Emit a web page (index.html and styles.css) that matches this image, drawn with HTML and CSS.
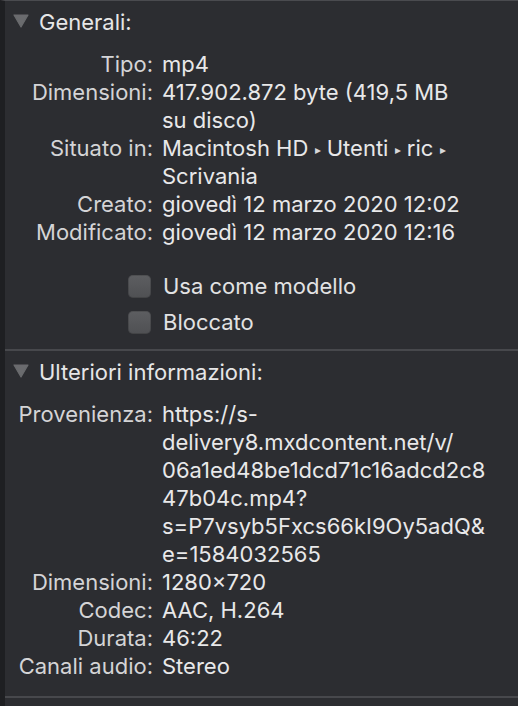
FILE: index.html
```html
<!DOCTYPE html>
<html lang="it">
<head>
<meta charset="utf-8">
<title>Info</title>
<link rel="stylesheet" href="styles.css">
</head>
<body>
<div class="panel">
  <section class="group">
    <div class="group-head">
      <svg class="disclosure" width="16" height="14" viewBox="0 0 16 14"><polygon points="1,1 15,1 8,13" fill="#6a6b6e" stroke="#6a6b6e" stroke-width="1.2" stroke-linejoin="round"/></svg>
      <span>Generali:</span>
    </div>
    <dl class="props">
      <dt>Tipo:</dt><dd>mp4</dd>
      <dt>Dimensioni:</dt><dd>417.902.872 byte (419,5 MB<br>su disco)</dd>
      <dt>Situato in:</dt><dd>Macintosh HD <span class="sep">▸</span> Utenti <span class="sep">▸</span> ric <span class="sep">▸</span><br>Scrivania</dd>
      <dt>Creato:</dt><dd>giovedì 12 marzo 2020 12:02</dd>
      <dt>Modificato:</dt><dd>giovedì 12 marzo 2020 12:16</dd>
    </dl>
    <div class="checks">
      <label class="check"><span class="box"></span>Usa come modello</label>
      <label class="check"><span class="box"></span>Bloccato</label>
    </div>
  </section>
  <section class="group">
    <div class="group-head">
      <svg class="disclosure" width="16" height="14" viewBox="0 0 16 14"><polygon points="1,1 15,1 8,13" fill="#6a6b6e" stroke="#6a6b6e" stroke-width="1.2" stroke-linejoin="round"/></svg>
      <span>Ulteriori informazioni:</span>
    </div>
    <dl class="props props-more">
      <dt>Provenienza:</dt><dd>https://s-<br>delivery8.mxdcontent.net/v/<br>06a1ed48be1dcd71c16adcd2c8<br>47b04c.mp4?<br>s=P7vsyb5Fxcs66kI9Oy5adQ&amp;<br>e=1584032565</dd>
      <dt>Dimensioni:</dt><dd>1280×720</dd>
      <dt>Codec:</dt><dd>AAC, H.264</dd>
      <dt>Durata:</dt><dd>46:22</dd>
      <dt>Canali audio:</dt><dd>Stereo</dd>
    </dl>
  </section>
</div>
</body>
</html>
```

FILE: styles.css
```css
* { box-sizing: border-box; }
html, body { margin: 0; padding: 0; }
body {
  background: #2c2d31;
  font-family: Inter, "Liberation Sans", sans-serif;
  font-size: 22px;
  color: #e4e4e5;
  width: 518px;
  height: 706px;
  overflow: hidden;
}
.panel {
  border-left: 5px solid #1e1f22;
  border-top: 1px solid #4a4b4f;
  min-height: 706px;
}
.group {
  border-bottom: 2px solid #47484c;
}
.group-head {
  display: flex;
  align-items: center;
  gap: 10px;
  height: 41px;
  padding-left: 8px;
  color: #e6e6e7;
}
.disclosure { flex: none; margin-top: -2px; }
.props {
  display: grid;
  grid-template-columns: 148px 1fr;
  column-gap: 9px;
  margin: 8px 0 0 0;
  line-height: 28px;
}
.props dt {
  text-align: right;
  color: #d4d4d6;
}
.props dd { margin: 0; color: #e8e8e9; }
.sep { font-size: 12px; line-height: 0; vertical-align: 2px; color: #d8d8d9; }
.checks {
  display: flex;
  flex-direction: column;
  margin: 22px 0 9px 0;
  padding-left: 123px;
}
.check {
  display: flex;
  align-items: center;
  gap: 12px;
  height: 36px;
  color: #e2e2e3;
}
.box {
  flex: none;
  width: 23px;
  height: 23px;
  border-radius: 5px;
  background: linear-gradient(#5d5e61, #4f5053);
  box-shadow: inset 0 0 0 1px rgba(0,0,0,0.15);
}
.props-more { margin-bottom: 16px; }
```
